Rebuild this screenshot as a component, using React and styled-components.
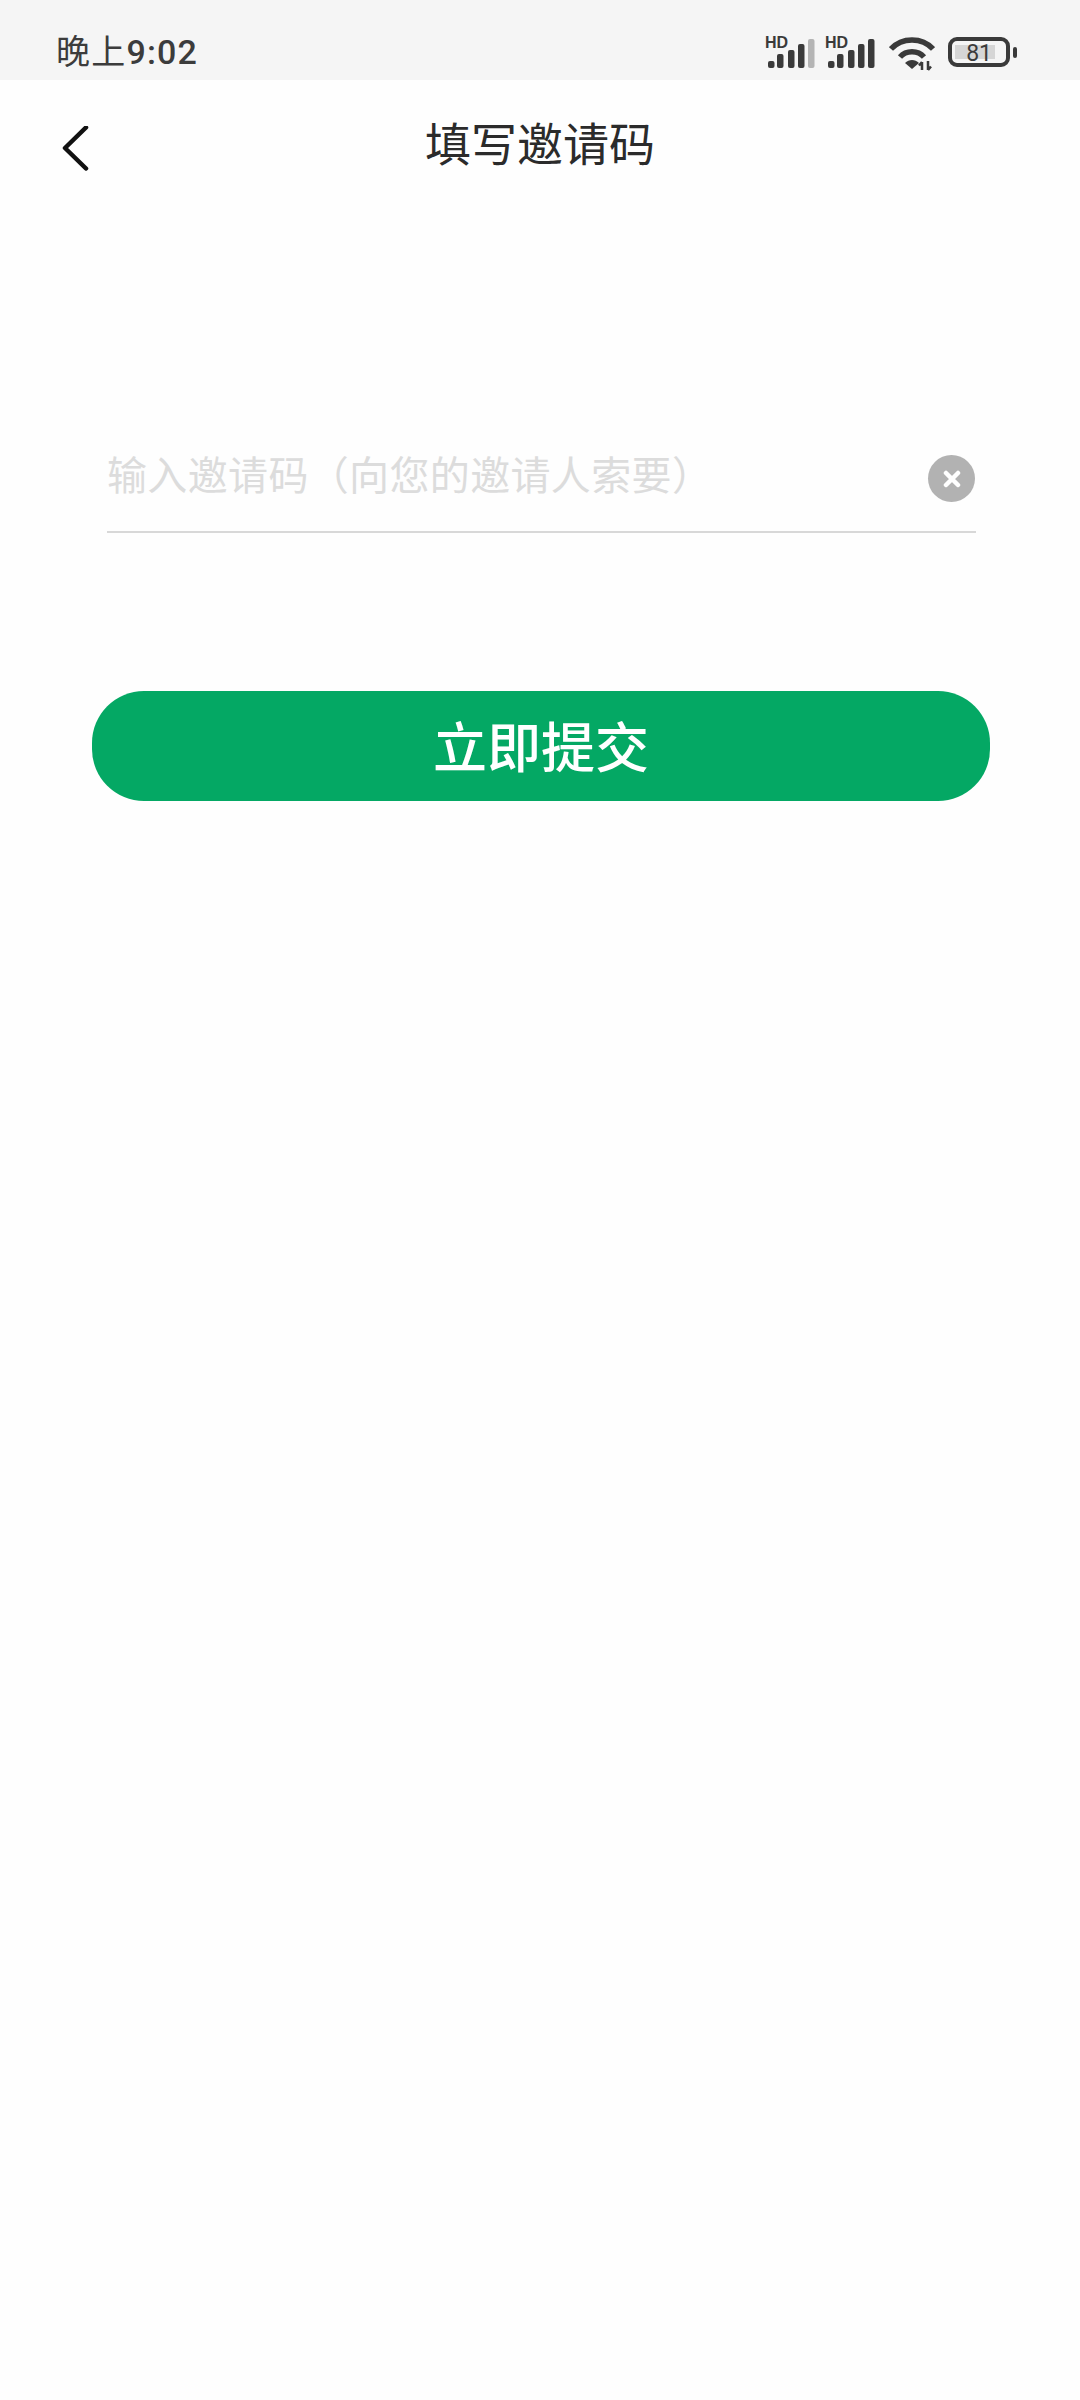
import React from 'react'
import styled, { createGlobalStyle } from 'styled-components'

const GlobalStyle = createGlobalStyle`
  html, body {
    margin: 0;
    padding: 0;
    background: #fefefe;
  }

  body {
    font-family: "Noto Sans CJK SC", "Noto Sans", sans-serif;
  }
`

const Page = styled.div`
  width: 1080px;
  height: 2400px;
  overflow: hidden;
  background: #fefefe;
`

const StatusBar = styled.div`
  height: 80px;
  box-sizing: border-box;
  padding: 0 63px 0 56px;
  background: #f5f5f5;
  display: flex;
  align-items: flex-start;
  justify-content: space-between;
  color: #3c3c3c;
`

const Clock = styled.div`
  margin-top: 30px;
  font-family: Roboto, "Noto Sans CJK SC", sans-serif;
  font-size: 34px;
  line-height: 44px;
  letter-spacing: 1.2px;
`

const ClockDigits = styled.span`
  font-weight: 500;
`

const StatusIcons = styled.div`
  display: flex;
  align-items: flex-start;
  margin-top: 36px;
`

const SignalSvg = styled.svg`
  display: block;
  margin-top: -3px;
  margin-right: 8px;
`

const WifiSvg = styled.svg`
  display: block;
  margin-left: 4px;
  margin-right: 13px;
`

const BatteryBody = styled.div`
  width: 62px;
  height: 30px;
  margin-top: 1px;
  box-sizing: border-box;
  border: 4px solid #3a3a3a;
  border-radius: 9px;
  padding: 4px 3px;
  display: flex;
`

const BatteryLevel = styled.div`
  width: 40px;
  background: #d6d6d6;
  display: flex;
  align-items: center;
  justify-content: flex-end;
  padding: 3px 3px 0 0;
  box-sizing: border-box;
  font-family: Roboto, sans-serif;
  font-size: 23px;
  line-height: 16px;
  color: #3c3c3c;
`

const BatteryTip = styled.div`
  width: 4px;
  height: 11px;
  margin: 11px 0 0 3px;
  border-radius: 2px;
  background: #3a3a3a;
`

const NavBar = styled.div`
  height: 130px;
  display: grid;
  grid-template-columns: 1fr auto 1fr;
  align-items: start;
  padding: 0 0 0 62px;
  margin-right: 62px;
`

const BackIcon = styled.svg`
  display: block;
  margin-top: 46px;
`

const Title = styled.h1`
  margin: 28px 0 0;
  font-size: 46px;
  line-height: 66px;
  font-weight: 400;
  color: #2b2b2b;
`

const Form = styled.div`
  margin-top: 234px;
  padding: 0 90px 0 92px;
`

const Field = styled.div`
  margin: 0 14px 0 15px;
  height: 89px;
  box-sizing: border-box;
  padding-right: 1px;
  border-bottom: 2px solid #d8d8d8;
  display: flex;
  justify-content: space-between;
  align-items: flex-start;
`

const Placeholder = styled.div`
  font-size: 40px;
  line-height: 58px;
  letter-spacing: 0.35px;
  color: #dcdcdc;
`

const ClearButton = styled.div`
  width: 47px;
  height: 47px;
  margin-top: 11px;
  border-radius: 50%;
  background: #b2b2b2;
  display: flex;
  align-items: center;
  justify-content: center;
`

const SubmitButton = styled.div`
  margin-top: 158px;
  height: 110px;
  box-sizing: border-box;
  padding-bottom: 3px;
  border-radius: 52px;
  background: #04a864;
  color: #fff;
  display: flex;
  align-items: center;
  justify-content: center;
  font-size: 54px;
  font-weight: 500;
`

function Signal ({ dim }) {
  const bars = [[3, 24, 7], [12, 17, 14], [23, 13, 18], [33, 7, 24]]
  return (
    <SignalSvg width="52" height="36" viewBox="0 -4 52 36">
      <text x="0" y="11" fontFamily="Liberation Sans, sans-serif" fontSize="16" fontWeight="700" fill="#3a3a3a">HD</text>
      {bars.map(([x, y, h]) => (
        <rect key={x} x={x} y={y} width="6.5" height={h} rx="2" fill="#3a3a3a" />
      ))}
      <rect x="43" y="2" width="6.5" height="29" rx="2" fill={dim ? '#b4b4b4' : '#3a3a3a'} />
    </SignalSvg>
  )
}

function Wifi () {
  return (
    <WifiSvg width="46" height="35" viewBox="0 0 46 35" fill="none">
      <path d="M2 13 C13 1 33 1 44 13" stroke="#3a3a3a" strokeWidth="5.5" />
      <path d="M11 21 C17 14 29 14 35 21" stroke="#3a3a3a" strokeWidth="5.5" />
      <path d="M16 27 C20 23 26 23 30 27 L23 33 Z" fill="#3a3a3a" />
      <path d="M33 26 V34 M30 29.5 L33 26 M39 34 V25 M39 34 L42 30.5" stroke="#3a3a3a" strokeWidth="2.5" />
    </WifiSvg>
  )
}

function App () {
  return (
    <Page>
      <GlobalStyle />
      <StatusBar>
        <Clock>晚上<ClockDigits>9:02</ClockDigits></Clock>
        <StatusIcons>
          <Signal dim />
          <Signal />
          <Wifi />
          <BatteryBody>
            <BatteryLevel>81</BatteryLevel>
          </BatteryBody>
          <BatteryTip />
        </StatusIcons>
      </StatusBar>
      <NavBar>
        <BackIcon width="28" height="48" viewBox="0 0 28 48" fill="none">
          <path d="M24 1.5 L3 22 L24 42.5" stroke="#111" strokeWidth="4.5" strokeLinecap="round" strokeLinejoin="round" />
        </BackIcon>
        <Title>填写邀请码</Title>
      </NavBar>
      <Form>
        <Field>
          <Placeholder>输入邀请码（向您的邀请人索要）</Placeholder>
          <ClearButton>
            <svg width="18" height="18" viewBox="0 0 18 18" fill="none">
              <path d="M3 3 L15 15 M15 3 L3 15" stroke="#fff" strokeWidth="4.5" strokeLinecap="round" />
            </svg>
          </ClearButton>
        </Field>
        <SubmitButton>立即提交</SubmitButton>
      </Form>
    </Page>
  )
}

export default App
